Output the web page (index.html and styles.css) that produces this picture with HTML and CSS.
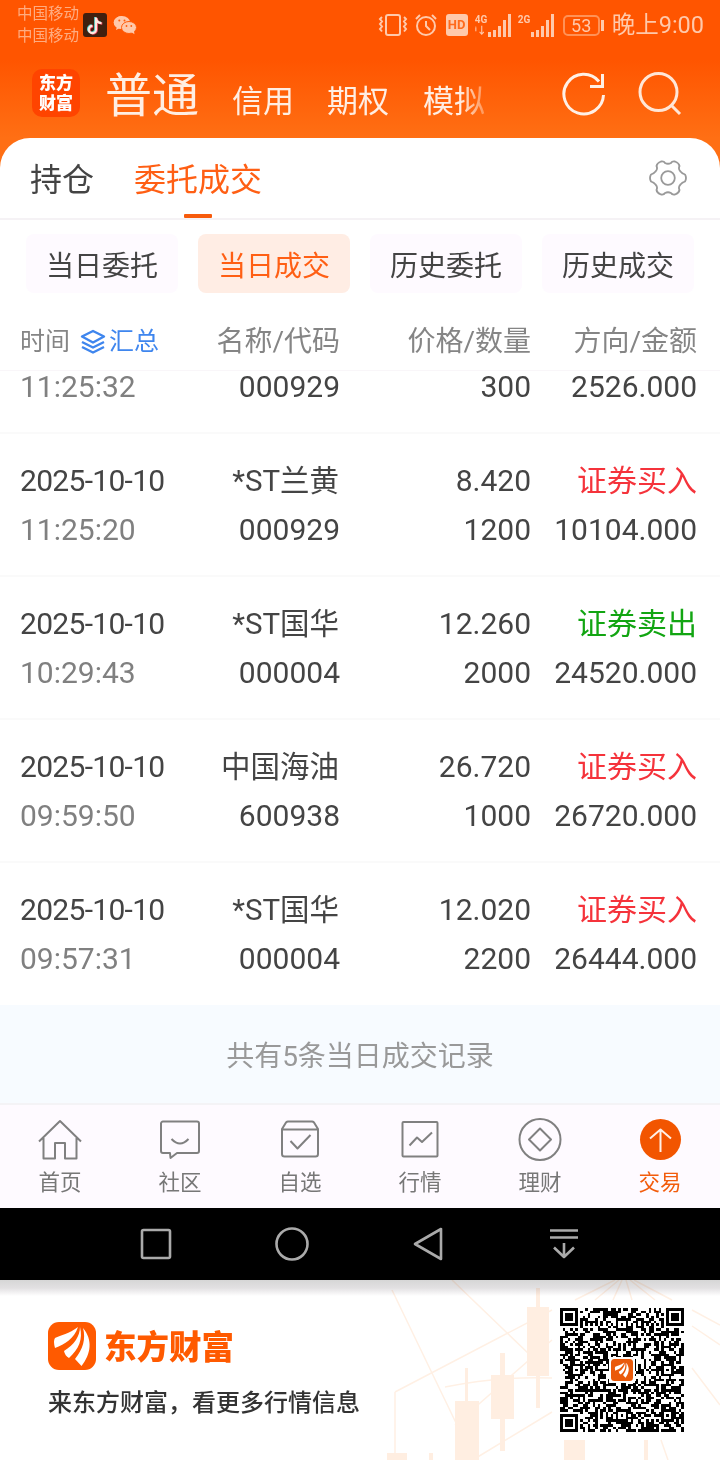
FILE: index.html
```html
<!DOCTYPE html>
<html lang="zh-CN">
<head>
    <meta charset="UTF-8">
    <meta name="viewport" content="width=device-width, initial-scale=1.0">
    <title>当日成交</title>
    <link rel="stylesheet" href="styles.css">
</head>
<body>
    <header class="top">
        <div class="status-bar">
            <div class="carriers">
                <span>中国移动</span>
                <span>中国移动</span>
            </div>
            <svg class="st-tiktok" width="24" height="24" viewBox="0 0 24 24">
                <rect width="24" height="24" rx="3" fill="#40200f"/>
                <g fill="none" stroke-width="2.2">
                    <path d="M12.2 4v12a3.6 3.6 0 1 1-3.6-3.6M12.2 5c.6 3 2.6 4.400 5.500 4.700" stroke="#4fd0cb"/>
                    <path d="M13.800 5v12a3.600 3.600 0 1 1-3.600-3.600M13.800 6c.6 3 2.600 4.400 5.500 4.700" stroke="#f04a65"/>
                    <path d="M13 4.500v12a3.600 3.600 0 1 1-3.600-3.600M13 5.500c.6 3 2.600 4.400 5.500 4.700" stroke="#ffe9df"/>
                </g>
            </svg>
            <svg class="st-wechat" width="24" height="20" viewBox="0 0 24 20" fill="#ffc9ab">
                <path d="M9 1C4.300 1 .8 4 .8 7.500c0 2 1.100 3.800 2.900 5L3 15l3-1.500c1 .2 2 .4 3 .3"/>
                <ellipse cx="9" cy="7.500" rx="8.200" ry="6.500"/>
                <ellipse cx="16" cy="12.500" rx="7.500" ry="6" stroke="#ff5c0a" stroke-width="1"/>
                <path d="M18 17l3.500 2.200-.6-3.400z"/>
                <g fill="#ff5c0a"><circle cx="6.300" cy="5.500" r="1"/><circle cx="11.500" cy="5.500" r="1"/><circle cx="13.500" cy="11" r=".9"/><circle cx="18.300" cy="11" r=".9"/></g>
            </svg>
            <div class="status-right">
                <svg width="30" height="24" viewBox="0 0 30 24" fill="none" stroke="#ffc9ab" stroke-width="2">
                    <rect x="8" y="2" width="14" height="20" rx="2"/>
                    <path d="M4 4L2 6l2 2.500L2 11l2 2.500L2 16l2 2.500M26 4l2 2-2 2.500 2 2.500-2 2.500 2 2.500-2 2.500"/>
                </svg>
                <svg class="st-alarm" width="24" height="24" viewBox="0 0 24 24" fill="none" stroke="#ffc9ab" stroke-width="2">
                    <circle cx="12" cy="13" r="9"/>
                    <path d="M12 8v5l4 4M2 6l4-4M22 6l-4-4"/>
                </svg>
                <span class="hd">HD</span>
                <div class="signal sig-a">
                    <span class="net">4G<br>ⁱ↓</span>
                    <svg width="23" height="23" viewBox="0 0 23 23" fill="#ffc9ab">
                        <path d="M0 18h3v5H0zM5 16h3v7H5zM10 12h3v11h-3zM15 6h3v17h-3zM20 0h3v23h-3z"/>
                    </svg>
                </div>
                <div class="signal sig-b">
                    <span class="net">2G</span>
                    <svg width="23" height="23" viewBox="0 0 23 23" fill="#ffc9ab">
                        <path d="M0 18h3v5H0zM5 16h3v7H5zM10 12h3v11h-3zM15 6h3v17h-3zM20 0h3v23h-3z"/>
                    </svg>
                </div>
                <span class="battery">53</span>
                <span class="clock">晚上9:00</span>
            </div>
        </div>
        <nav class="account-nav">
            <div class="app-logo">东方<br>财富</div>
            <span class="acc current">普通</span>
            <span class="acc">信用</span>
            <span class="acc">期权</span>
            <span class="acc fade">模拟</span>
            <svg class="nav-refresh" width="46" height="46" viewBox="0 0 46 46" fill="none" stroke="#fff0e6" stroke-width="3">
                <path d="M42.500 24A19.800 19.800 0 1 1 38 10.500M41.500 3v12.500H29"/>
            </svg>
            <svg width="46" height="46" viewBox="0 0 46 46" fill="none" stroke="#ffe6d6" stroke-width="3">
                <circle cx="21.500" cy="21" r="18.500"/>
                <path d="M34 34l9 9"/>
            </svg>
        </nav>
    </header>

    <main class="card">
        <div class="tabs">
            <span class="tab">持仓</span>
            <span class="tab active">委托成交</span>
            <svg width="38" height="38" viewBox="0 0 38 38" fill="none" stroke="#999" stroke-width="1.800" stroke-linejoin="round">
                <path d="M12 2.500Q15 2 16 4Q19 5.500 22 4Q23 2 26 2.500Q30 4 30.500 7Q29 10 31.500 12.500Q33 14.500 36 15.500Q38 19 36 22.500Q33 23.500 31.500 25.500Q29 28 30.500 31Q30 34 26 35.500Q23 36 22 34Q19 32.500 16 34Q15 36 12 35.500Q8 34 7.500 31Q9 28 6.500 25.500Q5 23.500 2 22.500Q0 19 2 15.500Q5 14.500 6.500 12.500Q9 10 7.500 7Q8 4 12 2.500Z"/>
                <circle cx="19" cy="19" r="6.800"/>
            </svg>
        </div>

        <div class="filters">
            <span class="filter">当日委托</span>
            <span class="filter active">当日成交</span>
            <span class="filter">历史委托</span>
            <span class="filter">历史成交</span>
        </div>

        <div class="grid-row list-head">
            <div class="head-time">
                <span>时间</span>
                <svg width="26" height="26" viewBox="0 0 26 26" fill="none" stroke="#3f86ee" stroke-width="2.400" stroke-linejoin="round">
                    <path d="M13 2l11 5.500-11 6-11-6z"/>
                    <path d="M2 13l11 5.500L24 13M2 18l11 5.500L24 18"/>
                </svg>
                <span class="summary">汇总</span>
            </div>
            <span>名称/代码</span>
            <span>价格/数量</span>
            <span>方向/金额</span>
        </div>

        <div class="deals">
            <div class="grid-row deal cut">
                <span class="time">11:25:32</span><span>000929</span><span>300</span><span>2526.000</span>
            </div>
            <div class="grid-row deal">
                <span class="date">2025-10-10</span><span class="name">*ST兰黄</span><span>8.420</span><span class="buy">证券买入</span>
                <span class="time">11:25:20</span><span>000929</span><span>1200</span><span>10104.000</span>
            </div>
            <div class="grid-row deal">
                <span class="date">2025-10-10</span><span class="name">*ST国华</span><span>12.260</span><span class="sell">证券卖出</span>
                <span class="time">10:29:43</span><span>000004</span><span>2000</span><span>24520.000</span>
            </div>
            <div class="grid-row deal">
                <span class="date">2025-10-10</span><span class="name">中国海油</span><span>26.720</span><span class="buy">证券买入</span>
                <span class="time">09:59:50</span><span>600938</span><span>1000</span><span>26720.000</span>
            </div>
            <div class="grid-row deal">
                <span class="date">2025-10-10</span><span class="name">*ST国华</span><span>12.020</span><span class="buy">证券买入</span>
                <span class="time">09:57:31</span><span>000004</span><span>2200</span><span>26444.000</span>
            </div>
        </div>
    </main>

    <div class="total">共有5条当日成交记录</div>

    <nav class="tab-bar">
        <div class="item">
            <svg width="46" height="46" viewBox="0 0 46 46">
                <path d="M2 24.500L23 4l21 20.500M6.500 21v20.500H18V26h10v15.500h11.500V21"/>
            </svg>
            <span>首页</span>
        </div>
        <div class="item">
            <svg width="46" height="46" viewBox="0 0 46 46">
                <path d="M6 4.500h34a2 2 0 0 1 2 2V34a2 2 0 0 1-2 2H20l-6.500 5-.5-5H6a2 2 0 0 1-2-2V6.500a2 2 0 0 1 2-2zM14.500 22q8.500 9 17 0"/>
            </svg>
            <span>社区</span>
        </div>
        <div class="item">
            <svg width="46" height="46" viewBox="0 0 46 46">
                <path d="M5 12L9 5.500Q10 4.500 11 4.500h24q1 0 2 1L41 12v25q0 2.500-2.500 2.500h-31Q5 39.500 5 37zM5 12.500h36M13.500 24l7 7.500L33.500 18"/>
            </svg>
            <span>自选</span>
        </div>
        <div class="item">
            <svg width="46" height="46" viewBox="0 0 46 46">
                <rect x="5.500" y="5" width="35" height="34.500" rx="1"/>
                <path d="M12.500 28.500l7.500-8 5 4.500 10-9.500"/>
            </svg>
            <span>行情</span>
        </div>
        <div class="item">
            <svg width="46" height="46" viewBox="0 0 46 46">
                <circle cx="23" cy="22.500" r="20.500"/>
                <path d="M23 11.500l11 11-11 11-11-11z"/>
            </svg>
            <span>理财</span>
        </div>
        <div class="item active">
            <svg width="46" height="46" viewBox="0 0 46 46">
                <circle cx="23.500" cy="22.500" r="20.500"/>
                <path d="M23.500 35V13M13 21.500L23.500 12.500 34 21.500"/>
            </svg>
            <span>交易</span>
        </div>
    </nav>

    <div class="system-nav">
        <svg width="36" height="36" viewBox="0 0 36 36"><rect x="4" y="4" width="28" height="28" rx="1.500"/></svg>
        <svg width="36" height="36" viewBox="0 0 36 36"><circle cx="18" cy="18" r="15.500"/></svg>
        <svg width="36" height="36" viewBox="0 0 36 36"><path d="M31 3v30L5 18z"/></svg>
        <svg width="36" height="36" viewBox="0 0 36 36"><path d="M4 4.500h28M4 11.500h28M18 17v14M8 21.500l10 9.500 10-9.500"/></svg>
    </div>

    <footer class="brand">
        <svg class="brand-bg" width="340" height="180" viewBox="0 0 340 180">
            <g fill="none" stroke="#fff0e4" stroke-width="1.500">
                <path d="M72 0L150 75M12 10L77 145M15 112L172 30M15 112V174M65 107Q120 96 172 98M75 145L172 60M96 178L172 132"/>
                <path d="M235 0L195 20M239 0L215 20M242 0L233 20M246 0L252 20M250 0L275 20M254 0L292 20M312 30L340 45M312 46L340 65M312 88L340 125M281 160L288 180"/>
            </g>
            <g fill="#ffeee1">
                <path d="M147 27h22v69H147zM156 8h4v120h-4zM111 95h23v44h-23zM120 73h5v98h-5zM75 121h24v59H75zM85 88h3v33h-3z"/>
                <path d="M184 160h21v20h-21zM264 160h4v20h-4zM49 173h4v7h-4zM7 173h20v7H7z"/>
            </g>
        </svg>
        <div class="brand-text">
            <div class="brand-name">
                <svg width="48" height="48" viewBox="0 0 48 48">
                    <rect width="48" height="48" rx="11" fill="#ff5a00"/>
                    <g id="wings" fill="#fff">
                        <path d="M30 5C21 12 13 13 7 16Q5 19 7 26C17 22 26 17 30 5z"/>
                        <path d="M32 5C32 14 26 23 16 29Q17 34 21 36C31 27 35 17 32 5z"/>
                        <path d="M35 6C38 17 35 27 27 37L33.500 44C43 32 45 18 35 6z"/>
                    </g>
                </svg>
                <strong>东方财富</strong>
            </div>
            <div class="slogan">来东方财富，看更多行情信息</div>
        </div>
        <div class="qr">
            <svg id="qr" width="124" height="124" viewBox="0 0 49 49" shape-rendering="crispEdges"></svg>
            <svg class="qr-logo" width="26" height="26" viewBox="0 0 52 52">
                <rect width="52" height="52" fill="#fff"/>
                <rect x="4" y="4" width="44" height="44" rx="7" fill="#ea5a0b"/>
                <use href="#wings" transform="translate(7 7) scale(.78)"/>
            </svg>
        </div>
    </footer>

    <script>
        // === QR CODE ===
        const SIZE = 49;
        let seed = 20251010;

        function random() {
            seed = (seed * 1103515245 + 12345) % 2147483648;
            return seed / 2147483648;
        }

        // concentric square marker: returns null when the cell is outside of it
        function marker(x, y, cx, cy, radius) {
            const d = Math.max(Math.abs(x - cx), Math.abs(y - cy));
            if (d > radius) return null;
            if (radius === 4) return d === 3 || d <= 1;
            return d !== 1;
        }

        function isDark(x, y) {
            for (const [cx, cy] of [[3, 3], [45, 3], [3, 45]]) {
                const cell = marker(x, y, cx, cy, 4);
                if (cell !== null) return cell;
            }
            for (const [cx, cy] of [[24, 6], [6, 24], [42, 24], [24, 42], [42, 42]]) {
                const cell = marker(x, y, cx, cy, 2);
                if (cell !== null) return cell;
            }
            if (x === 6 || y === 6) return (x + y) % 2 === 0;
            return random() < 0.53;
        }

        let path = '';
        for (let y = 0; y < SIZE; y++) {
            for (let x = 0; x < SIZE; x++) {
                if (isDark(x, y)) path += `M${x} ${y}h1v1h-1z`;
            }
        }
        document.getElementById('qr').innerHTML = `<path d="${path}"/>`;
    </script>
</body>
</html>
```
FILE: styles.css
```css
/* === BASE === */
* {
    box-sizing: border-box;
}

body {
    margin: 0;
    width: 720px;
    height: 1460px;
    overflow: hidden;
    background-color: #fff;
    color: #444;
    font-family: Roboto, "Noto Sans CJK SC", sans-serif;
}

svg {
    display: block;
    flex-shrink: 0;
}

/* === HEADER === */
.top {
    height: 170px;
    background: linear-gradient(#ff5500 0, #ff5500 60px, #ff6f14 138px);
}

.status-bar {
    display: flex;
    align-items: center;
    height: 50px;
    padding: 0 16px 0 17px;
    color: #ffc9ab;
}

.carriers {
    display: flex;
    flex-direction: column;
    width: 66px;
    font-size: 15.5px;
    line-height: 22px;
    color: #ffac80;
}

.st-wechat {
    margin-left: 6px;
}

.status-right {
    display: flex;
    align-items: center;
    margin-left: auto;
}

.st-alarm {
    margin-left: 6px;
}

.hd {
    width: 22px;
    height: 22px;
    margin-left: 8px;
    border-radius: 3px;
    background-color: #ffc9ab;
    color: #ff6a1c;
    font-size: 13px;
    font-weight: bold;
    line-height: 22px;
    text-align: center;
}

.signal {
    display: flex;
    height: 23px;
}

.sig-a {
    margin-left: 7px;
}

.sig-b {
    margin-left: 7px;
}

.net {
    width: 13px;
    font-size: 10px;
    font-weight: bold;
    line-height: 11px;
}

.battery {
    position: relative;
    width: 37px;
    height: 21px;
    margin-left: 9px;
    border: 2px solid #ff9257;
    border-radius: 5px;
    font-size: 18px;
    line-height: 18px;
    text-align: center;
}

.battery::after {
    content: "";
    position: absolute;
    top: 3px;
    right: -6px;
    width: 3px;
    height: 11px;
    background-color: #ffc9ab;
}

.clock {
    margin-left: 12px;
    font-size: 23.5px;
    line-height: 30px;
    white-space: nowrap;
}

.account-nav {
    display: flex;
    align-items: center;
    height: 88px;
    padding: 0 37px 0 32px;
    color: #ffeee3;
}

.app-logo {
    width: 48px;
    height: 48px;
    margin: -2px 26px 0 0;
    padding-top: 4px;
    border-radius: 10px;
    background-color: #ff4400;
    color: #fff;
    font-size: 17px;
    font-weight: 900;
    line-height: 20px;
    text-align: center;
}

.acc {
    margin: 16px 33px 0 0;
    font-size: 31px;
    line-height: 40px;
}

.acc.current {
    margin-top: 3px;
    margin-left: -1px;
    font-size: 47px;
    line-height: 60px;
}

.fade {
    margin-left: 1px;
    mask-image: linear-gradient(90deg, #000 60%, transparent 120%);
}

.nav-refresh {
    margin-left: auto;
    margin-right: 30px;
}

.account-nav svg {
    margin-top: -1px;
}

/* === CARD === */
.card {
    height: 867px;
    margin-top: -32px;
    border-radius: 30px 30px 0 0;
    background-color: #fff;
}

.tabs {
    display: flex;
    align-items: center;
    height: 82px;
    padding: 0 33px 0 30px;
    border-bottom: 2px solid #f5f2f5;
}

.tab {
    position: relative;
    height: 80px;
    margin-right: 41px;
    padding-top: 3px;
    font-size: 32px;
    line-height: 78px;
}

.tab.active {
    margin-left: -1px;
    color: #ff5f14;
}

.tab.active::after {
    content: "";
    position: absolute;
    left: 50%;
    bottom: 0;
    width: 28px;
    height: 4px;
    margin-left: -14px;
    border-radius: 1px;
    background-color: #f75b0c;
}

.tabs svg {
    margin-left: auto;
}

.filters {
    display: flex;
    gap: 20px;
    padding: 14px 26px 0;
}

.filter {
    flex: 1;
    height: 59px;
    padding-top: 2px;
    border-radius: 8px;
    background-color: #fefaff;
    font-size: 28px;
    line-height: 61px;
    text-align: center;
}

.filter.active {
    background-color: #ffede4;
    color: #ff5f14;
}

/* === DEAL LIST === */
.grid-row {
    display: grid;
    grid-template-columns: 160px 160px 191px 166px;
    align-content: start;
    padding: 0 23px 0 20px;
    text-align: right;
}

.list-head {
    height: 78px;
    padding-top: 20px;
    border-bottom: 1px solid #f9f6f9;
    color: #858585;
    font-size: 28px;
    line-height: 58px;
}

.head-time {
    display: flex;
    align-items: center;
    height: 58px;
    font-size: 25px;
}

.head-time svg {
    margin: 0 3px 0 10px;
}

.summary {
    color: #3f86ee;
}

.deal {
    height: 143px;
    padding-top: 22px;
    border-bottom: 2px solid #fafafa;
    font-size: 30px;
    line-height: 49px;
}

.deal.cut {
    height: 63px;
    padding-top: 1px;
    line-height: 30px;
}

.deal:last-child {
    border-bottom: none;
}

.date,
.time {
    text-align: left;
}

.date {
    letter-spacing: -0.7px;
}

.time {
    color: #808080;
}

.name {
    padding-top: 1px;
    padding-right: 1px;
    font-size: 29.5px;
    line-height: 48px;
}

.buy {
    color: #f5333b;
}

.sell {
    color: #12a512;
}

.total {
    height: 98px;
    background-color: #f7fbff;
    color: #999;
    font-size: 28px;
    line-height: 104px;
    text-align: center;
}

/* === BOTTOM TABS === */
.tab-bar {
    display: flex;
    height: 105px;
    padding-top: 12px;
    border-top: 2px solid #f4f3f6;
    background-color: #fefaff;
}

.item {
    display: flex;
    flex: 1;
    flex-direction: column;
    align-items: center;
    color: #777;
    font-size: 21.5px;
    line-height: 40px;
}

.item svg {
    fill: none;
    stroke: #808080;
    stroke-width: 2;
    stroke-linejoin: round;
}

.item.active {
    color: #f25c0c;
}

.item.active circle {
    fill: #f25500;
    stroke: none;
}

.item.active path {
    stroke: #fff0e6;
}

/* === SYSTEM NAV === */
.system-nav {
    display: flex;
    align-items: center;
    gap: 100px;
    height: 72px;
    padding-left: 138px;
    background-color: #000;
}

.system-nav svg {
    fill: none;
    stroke: #aaa;
    stroke-width: 2.6;
    stroke-linejoin: round;
}

/* === BRAND FOOTER === */
.brand {
    position: relative;
    display: flex;
    justify-content: space-between;
    height: 180px;
    padding: 22px 30px 0 48px;
    background: linear-gradient(#d6d6d6, #e2e0e2 8px, #fff 16px);
}

.brand-bg {
    position: absolute;
    top: 0;
    right: 0;
    mix-blend-mode: multiply;
}

.brand-text {
    padding-top: 20px;
}

.brand-name {
    display: flex;
    align-items: center;
    gap: 8px;
    height: 48px;
    color: #ff5a00;
}

.brand-name strong {
    margin-top: -3px;
    font-size: 32.5px;
    font-weight: 900;
}

.slogan {
    margin-top: 14px;
    color: #333;
    font-size: 24px;
    font-weight: 500;
    line-height: 38px;
}

.qr {
    position: relative;
    width: 136px;
    height: 136px;
    padding: 6px;
    background-color: #fff;
}

.qr-logo {
    position: absolute;
    top: 55px;
    left: 55px;
}
```
